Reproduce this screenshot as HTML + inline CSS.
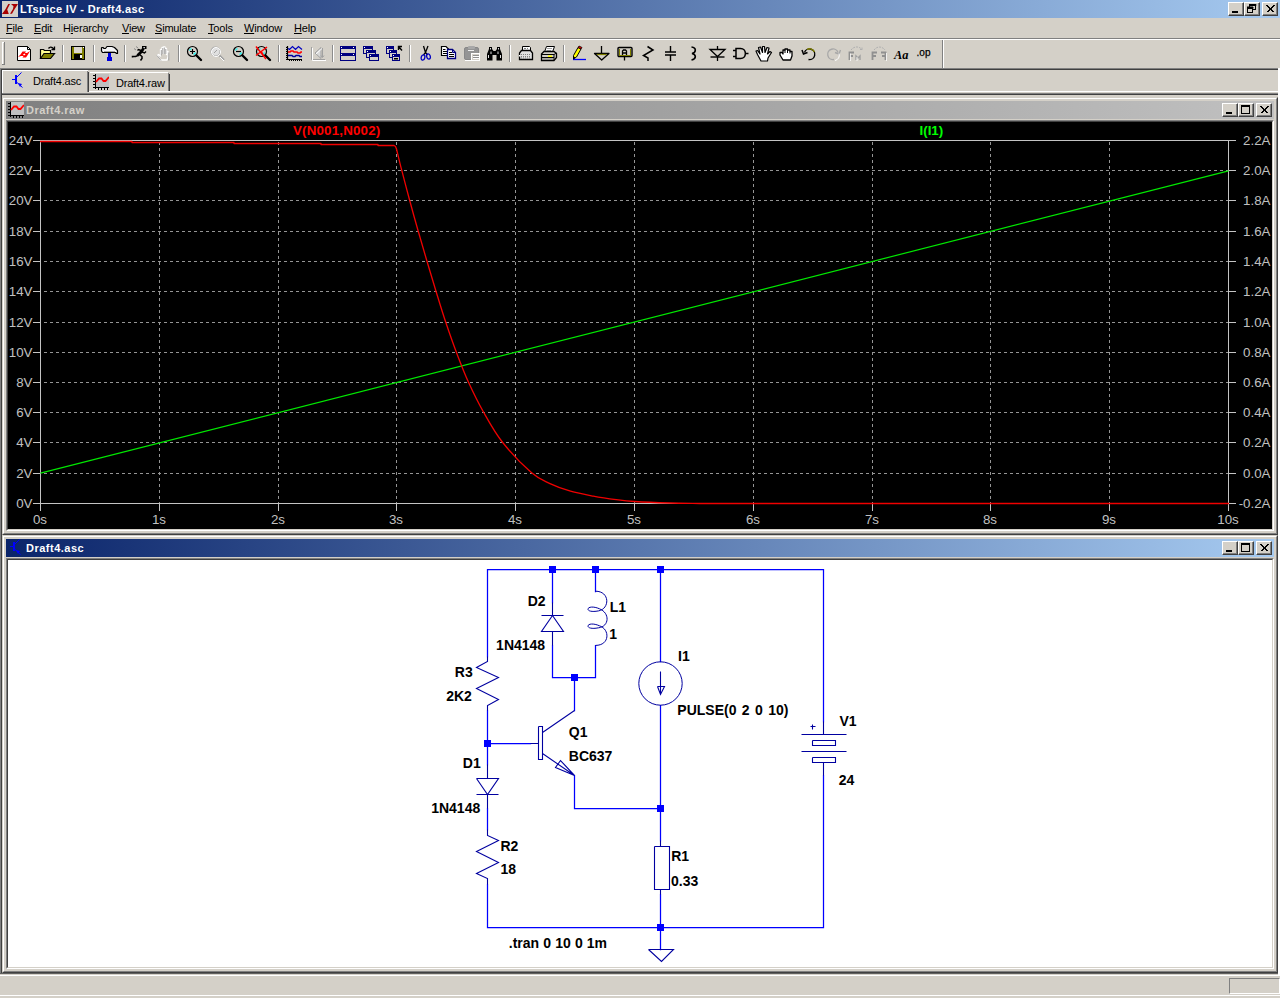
<!DOCTYPE html>
<html><head><meta charset="utf-8"><title>LTspice IV - Draft4.asc</title>
<style>
*{box-sizing:border-box;margin:0;padding:0}
html,body{width:1280px;height:998px;overflow:hidden;background:#d4d0c8;font-family:"Liberation Sans",sans-serif;font-size:11px;color:#000}
.abs{position:absolute}
#title{position:absolute;left:0;top:0;width:1280px;height:18px;background:linear-gradient(90deg,#0a246a,#a6caf0)}
#title .t{position:absolute;left:20px;top:2px;font-weight:bold;color:#fff;font-size:11px;line-height:14px;white-space:nowrap;letter-spacing:.35px}
.menu span{position:absolute;top:21px;line-height:14px;font-size:11px;white-space:nowrap;letter-spacing:-.2px}
.hl{position:absolute;height:1px;left:0;width:1280px}
.cbtn{position:absolute;width:16px;height:14px;background:#d4d0c8;border:1px solid;border-color:#fff #404040 #404040 #fff;box-shadow:inset -1px -1px 0 #808080}
</style></head><body>
<div id="title"><svg class="abs" style="left:2px;top:1px" width="16" height="16" viewBox="0 0 16 16"><rect width="16" height="16" fill="#d4d0c8"/><path d="M6.300 3H8L5.200 8.500L6.800 13H0L3.300 8.500Z" fill="#a80000"/><path d="M9 3H16L12.700 8L10 12.800H8L11 8L11.500 5.200Z" fill="#a80000"/></svg><div class="t">LTspice IV - Draft4.asc</div>
<div class="cbtn" style="left:1228px;top:2px"><i style="position:absolute;left:3px;top:8px;width:6px;height:2px;background:#000"></i></div>
<div class="cbtn" style="left:1244px;top:2px"><svg class="abs" style="left:2px;top:1px" width="10" height="10" viewBox="0 0 10 10"><path d="M3 0.5H9V1.5H3ZM2.5 0V3M8.5 0V6M6 5.5H9" stroke="#000" fill="none"/><path d="M0 3h6v1.5H0zM0.5 3V9M5.5 3V9M0 8.5H6" stroke="#000" fill="none"/><rect x="0" y="3" width="6" height="2" fill="#000"/><rect x="2" y="0" width="7" height="2" fill="#000"/></svg></div>
<div class="cbtn" style="left:1262px;top:2px"><svg class="abs" style="left:3px;top:2px" width="9" height="8" viewBox="0 0 9 8"><path d="M0.5 0.5L7.5 7.5M1.5 0.5L8.5 7.5M7.5 0.5L0.5 7.5M8.5 0.5L1.5 7.5" stroke="#000" stroke-width="1" fill="none" shape-rendering="crispEdges"/></svg></div>
</div>
<div class="menu"><span style="left:6px"><u>F</u>ile</span><span style="left:34px"><u>E</u>dit</span><span style="left:63px">H<u>i</u>erarchy</span><span style="left:122px"><u>V</u>iew</span><span style="left:155px"><u>S</u>imulate</span><span style="left:208px"><u>T</u>ools</span><span style="left:244px"><u>W</u>indow</span><span style="left:294px"><u>H</u>elp</span></div>
<div class="hl" style="top:38px;background:#808080"></div><div class="hl" style="top:39px;background:#fff"></div>
<div class="abs" style="left:2px;top:42px;width:1px;height:22px;background:#fff"></div><div class="abs" style="left:3px;top:42px;width:1px;height:1px;background:#fff"></div><div class="abs" style="left:4px;top:42px;width:1px;height:23px;background:#808080"></div><div class="abs" style="left:2px;top:64px;width:3px;height:1px;background:#808080"></div>
<div class="abs" style="left:942px;top:40px;width:1px;height:28px;background:#808080"></div><div class="abs" style="left:943px;top:40px;width:1px;height:28px;background:#fff"></div>
<div class="abs" style="left:0;top:68px;width:1278px;height:1px;background:#808080"></div><div class="abs" style="left:1px;top:69px;width:1277px;height:1px;background:#404040"></div>
<div class="abs" style="left:0;top:68px;width:1px;height:906px;background:#808080"></div><div class="abs" style="left:1px;top:69px;width:1px;height:905px;background:#404040"></div>
<div class="abs" style="left:1278px;top:68px;width:2px;height:907px;background:#fff"></div>
<svg class="abs" style="left:17px;top:46px;overflow:visible" width="16" height="16" viewBox="0 0 16 16"><path d="M0.500 0.500H10.500L13.500 3.500V14.500H0.500Z" fill="#fff" stroke="#000"/><path d="M10.500 0.500V3.500H13.500" fill="none" stroke="#000"/><path d="M1 11L3.500 8.500L5.500 5.500H9L8 7H10L13 5L11 8.500L9 11.500H5.500L6.500 10H4Z" fill="#f00"/><path d="M6 8.500L7.500 7.500L8.500 8.500L7 9.500Z" fill="#fff"/></svg>
<svg class="abs" style="left:40px;top:46px;overflow:visible" width="16" height="16" viewBox="0 0 16 16"><path d="M0.500 12.500V3.500H3.500L4.500 4.500H10.500V7.500" fill="#ffff90" stroke="#000" stroke-width="1.200"/><path d="M0.500 12.500L4 7.500H14.500L10.500 12.500Z" fill="#808000" stroke="#000" stroke-width="1.200"/><path d="M8.500 2.500Q10.500 -0.500 14 3" fill="none" stroke="#000" stroke-width="1.400"/><path d="M11.500 3.500H15M14.500 0.500V4" fill="none" stroke="#000" stroke-width="1.300"/></svg>
<svg class="abs" style="left:71px;top:46px;overflow:visible" width="16" height="16" viewBox="0 0 16 16"><rect x="0.500" y="0.500" width="13" height="13" fill="#808000" stroke="#000"/><rect x="3" y="1" width="8" height="6" fill="#dcd8d0"/><rect x="3" y="8" width="8" height="5" fill="#000"/><rect x="9" y="9" width="2" height="3" fill="#fff"/><rect x="12" y="1" width="1" height="1" fill="#fff"/></svg>
<svg class="abs" style="left:102px;top:46px;overflow:visible" width="16" height="16" viewBox="0 0 16 16"><path d="M-0.500 2V5L0.500 6.500H13.500L14.500 7.500L15.500 7.500V4.500L12.500 1.500L10 0.500H5L3.500 2.500H2L1 1.500H0Z" fill="#f4f4f4" stroke="#000" stroke-width="1.200" stroke-linejoin="round"/><path d="M2 5.500H13" stroke="#a0a0a0"/><rect x="6" y="7" width="3" height="5" fill="#0000e0"/><rect x="5" y="11" width="5" height="4" fill="#0000e0"/></svg>
<svg class="abs" style="left:133px;top:46px;overflow:visible" width="16" height="16" viewBox="0 0 16 16"><rect x="9" y="0" width="4.500" height="3" fill="#000"/><rect x="10.500" y="1" width="1.300" height="1.300" fill="#fff"/><path d="M10.500 2.500L8 6L4.500 9.500" stroke="#000" stroke-width="2.800" fill="none"/><path d="M5 9.500L2.500 10.500H-0.500V11.500" stroke="#000" stroke-width="1.500" fill="none"/><path d="M6.500 8.500L9 10.500V12.500L7.500 14.500" stroke="#000" stroke-width="1.500" fill="none"/><path d="M8 4.500L5.500 3.500L4.500 4.500" stroke="#000" stroke-width="1.400" fill="none"/><path d="M9 6L11.500 7L13 5.500" stroke="#000" stroke-width="1.400" fill="none"/><path d="M1 2.500L3 4M3 0.500L5 2" stroke="#808080" stroke-width=".9" fill="none"/></svg>
<svg class="abs" style="left:156px;top:46px;overflow:visible" width="16" height="16" viewBox="0 0 16 16"><path d="M4.500 14L1.500 9.500L2.500 8.500L4.500 10V3.500H6V7.500V1.500H7.500V7.500V1H9V7.500V2.500H10.500V8.500V5.500H12V11L11 14Z" fill="#d4d0c8" stroke="#fff" stroke-width="1.300" stroke-linejoin="round"/><path d="M5 14.500L1 9.500M5.300 4V9.500M6.800 2V8M8.300 1.500V8M9.800 3V8M12.800 14.500V6.500" stroke="#9a9a9a" fill="none" stroke-width=".9"/></svg>
<svg class="abs" style="left:187px;top:46px;overflow:visible" width="16" height="16" viewBox="0 0 16 16"><circle cx="5.5" cy="5.500" r="5" fill="#d4d0c8" stroke="#000" stroke-width="1.200"/><path d="M2.500 4.500A3.200 3.200 0 0 1 4.500 2.500M6.500 8.500A3.200 3.200 0 0 0 8.500 6.500" stroke="#0ff" stroke-width="1.200" fill="none"/><path d="M9.500 9.500L14 14" stroke="#000" stroke-width="2.400" stroke-linecap="round"/><path d="M3 5.500H8M5.500 3V8" stroke="#000" stroke-width="1.200"/></svg>
<svg class="abs" style="left:210px;top:46px;overflow:visible" width="16" height="16" viewBox="0 0 16 16"><circle cx="5.5" cy="5.500" r="4.500" fill="#e0e0e0" stroke="#a8a8a8" stroke-width="1.200"/><circle cx="6" cy="6" r="4.500" fill="none" stroke="#fff" stroke-width="1"/><path d="M4 7L7 4" stroke="#a0a0a0"/><path d="M9.500 9.500L14 14" stroke="#a0a0a0" stroke-width="2"/><path d="M10 11L14 15" stroke="#fff" stroke-width="1"/></svg>
<svg class="abs" style="left:233px;top:46px;overflow:visible" width="16" height="16" viewBox="0 0 16 16"><circle cx="5.5" cy="5.500" r="5" fill="#d4d0c8" stroke="#000" stroke-width="1.200"/><path d="M2.500 4.500A3.200 3.200 0 0 1 4.500 2.500M6.500 8.500A3.200 3.200 0 0 0 8.500 6.500" stroke="#0ff" stroke-width="1.200" fill="none"/><path d="M9.500 9.500L14 14" stroke="#000" stroke-width="2.400" stroke-linecap="round"/><path d="M3 5.500H8" stroke="#000" stroke-width="1.200"/></svg>
<svg class="abs" style="left:256px;top:46px;overflow:visible" width="16" height="16" viewBox="0 0 16 16"><circle cx="5.5" cy="5.500" r="5" fill="#d4d0c8" stroke="#000" stroke-width="1.200"/><path d="M2.500 4.500A3.200 3.200 0 0 1 4.500 2.500M6.500 8.500A3.200 3.200 0 0 0 8.500 6.500" stroke="#0ff" stroke-width="1.200" fill="none"/><path d="M9.500 9.500L14 14" stroke="#000" stroke-width="2.400" stroke-linecap="round"/><path d="M0 0.500L10 13M0 9.500L11 1M5 5L9 12" stroke="#f00" stroke-width="1.500" fill="none"/></svg>
<svg class="abs" style="left:287px;top:46px;overflow:visible" width="16" height="16" viewBox="0 0 16 16"><path d="M0.500 0V14M-1 13.500H15" stroke="#000" stroke-width="1.200" fill="none"/><path d="M-1 1.500H0M-1 3.500H0M-1 5.500H0M-1 7.500H0M-1 9.500H0M-1 11.500H0M2.500 14V15M4.500 14V15M6.500 14V15M8.500 14V15M10.500 14V15M12.500 14V15M14.500 14V15" stroke="#000" fill="none"/><path d="M1 2.500L2.500 3.500L5.500 0.500L8.500 3.500L11.500 0.500L15 3.500" stroke="#0000c0" stroke-width="1.200" fill="none"/><path d="M1 6H3L4 5H6L7 6H10L11 7H13L14 6H15" stroke="#f00" stroke-width="1.700" fill="none"/><path d="M1 9.500H5L6 10.500H8L9 9.500H12L13 10.500H15" stroke="#0000a0" stroke-width="1.500" fill="none"/></svg>
<svg class="abs" style="left:310px;top:46px;overflow:visible" width="16" height="16" viewBox="0 0 16 16"><path d="M1.500 1V13.500H15" stroke="#a0a0a0" fill="none"/><path d="M2.500 2V14.500H16" stroke="#fff" fill="none"/><path d="M5 7L11 1.500V12.500Z" fill="#d8d8d8" stroke="#a0a0a0"/><path d="M12.500 2V11M11 9.500L12.500 11.500L14 9.500" stroke="#a0a0a0" fill="none"/><path d="M6 8L12 2.500" stroke="#fff" fill="none"/></svg>
<svg class="abs" style="left:340px;top:46px;overflow:visible" width="16" height="16" viewBox="0 0 16 16"><rect x="0.5" y="0.5" width="15" height="7" fill="#d4d0c8" stroke="#000080"/><rect x="0" y="0" width="16" height="3" fill="#000080"/><rect x="1" y="1" width="1" height="1" fill="#fff"/><rect x="0.5" y="7.5" width="15" height="7" fill="#d4d0c8" stroke="#000080"/><rect x="0" y="7" width="16" height="3" fill="#000080"/><rect x="1" y="8" width="1" height="1" fill="#fff"/><rect x="13" y="1" width="1" height="1" fill="#fff"/><rect x="13" y="8" width="1" height="1" fill="#fff"/></svg>
<svg class="abs" style="left:363px;top:46px;overflow:visible" width="16" height="16" viewBox="0 0 16 16"><rect x="0.5" y="0.5" width="9" height="7" fill="#d4d0c8" stroke="#000080"/><rect x="0" y="0" width="10" height="3" fill="#000080"/><rect x="1" y="1" width="1" height="1" fill="#fff"/><rect x="3.5" y="4.5" width="9" height="7" fill="#d4d0c8" stroke="#000080"/><rect x="3" y="4" width="10" height="3" fill="#000080"/><rect x="4" y="5" width="1" height="1" fill="#fff"/><rect x="6.5" y="8.5" width="9" height="6" fill="#d4d0c8" stroke="#000080"/><rect x="6" y="8" width="10" height="3" fill="#000080"/><rect x="7" y="9" width="1" height="1" fill="#fff"/></svg>
<svg class="abs" style="left:386px;top:46px;overflow:visible" width="16" height="16" viewBox="0 0 16 16"><rect x="0.5" y="0.5" width="7" height="7" fill="#d4d0c8" stroke="#000080"/><rect x="0" y="0" width="8" height="3" fill="#000080"/><rect x="1" y="1" width="1" height="1" fill="#fff"/><rect x="3.5" y="4.5" width="7" height="7" fill="#d4d0c8" stroke="#000080"/><rect x="3" y="4" width="8" height="3" fill="#000080"/><rect x="4" y="5" width="1" height="1" fill="#fff"/><rect x="6.5" y="8.5" width="7" height="6" fill="#d4d0c8" stroke="#000080"/><rect x="6" y="8" width="8" height="3" fill="#000080"/><rect x="7" y="9" width="1" height="1" fill="#fff"/><rect x="8" y="12" width="4" height="1.500" fill="#000"/><path d="M16 0.500H12.500V4M12.500 0.500L16 4.500" stroke="#000" stroke-width="1.400" fill="none"/></svg>
<svg class="abs" style="left:418px;top:46px;overflow:visible" width="16" height="16" viewBox="0 0 16 16"><path d="M5.500 0L7.500 6.500L9.500 9M10 0L7.500 6.500L5.500 9" stroke="#000" stroke-width="1.300" fill="none"/><ellipse cx="5" cy="11.500" rx="1.800" ry="2.700" fill="none" stroke="#0000c0" stroke-width="1.300" transform="rotate(15 5 11.500)"/><ellipse cx="10.500" cy="10.500" rx="1.800" ry="2.700" fill="none" stroke="#0000c0" stroke-width="1.300" transform="rotate(-15 10.500 10.500)"/></svg>
<svg class="abs" style="left:441px;top:46px;overflow:visible" width="16" height="16" viewBox="0 0 16 16"><path d="M0.500 0.500H5L7.500 3V9.500H0.500Z" fill="#fff" stroke="#000" stroke-width="1.200"/><path d="M2 3.500H4.500M2 5.500H6M2 7.500H6" stroke="#000"/><path d="M6.500 3.500H11.500L14.500 6.500V12.500H6.500Z" fill="#fff" stroke="#000080" stroke-width="1.300"/><path d="M8 6.500H11M8 8.500H13M8 10.500H13" stroke="#000"/><path d="M11.500 3.500V6.500H14.500" fill="none" stroke="#000080"/></svg>
<svg class="abs" style="left:464px;top:46px;overflow:visible" width="16" height="16" viewBox="0 0 16 16"><rect x="0.500" y="1.500" width="14" height="12" rx="1.500" fill="#949494" stroke="#888"/><rect x="4" y="0" width="7" height="3" rx="1" fill="#a8a8a8"/><path d="M4 4.500H10" stroke="#f0f0f0"/><path d="M1 14.500H7" stroke="#fff"/><rect x="7.500" y="7.500" width="8" height="7" fill="#d4d0c8" stroke="#fff"/><path d="M9 9.500H15M9 11.500H15" stroke="#909090"/><path d="M9 10.500H15M9 12.500H15" stroke="#fff"/></svg>
<svg class="abs" style="left:487px;top:46px;overflow:visible" width="16" height="16" viewBox="0 0 16 16"><path d="M2 1H5V3L6.500 5H8.500L10 3V1H13V3L15 8V14.500H9.500V9H5.500V14.500H0V8L2 3Z" fill="#000"/><path d="M3.500 2V3.500M11.500 2V3.500M1.500 9V12M4 5.500V8M11 5.500V8M13.500 9V12" stroke="#e0e0e0" stroke-width="1"/></svg>
<svg class="abs" style="left:518px;top:46px;overflow:visible" width="16" height="16" viewBox="0 0 16 16"><path d="M4.500 5V0.500H11.500L12.500 1.500V5" fill="#fff" stroke="#000"/><path d="M6 2.500H8M9 2.500H10" stroke="#808080"/><path d="M1.500 13.500V7L3.500 4.500H12.500L14.500 7V13.500Z" fill="#e0e0e0" stroke="#000" stroke-width="1.300"/><path d="M3 8.500H13M3 10.500H13M3 12H13" stroke="#808080" stroke-dasharray="1 1"/><rect x="1" y="9" width="1.500" height="1.500" fill="#fff"/></svg>
<svg class="abs" style="left:541px;top:46px;overflow:visible" width="16" height="16" viewBox="0 0 16 16"><path d="M3.500 6L5.500 0.500H13.500L11.500 6" fill="#fff" stroke="#000"/><path d="M6 2.500H11M5.500 4.500H10" stroke="#a0a0a0"/><path d="M0.500 8L3 5.500H13L15.500 7.500V11.500L13 14.500H0.500Z" fill="#d4d0c8" stroke="#000" stroke-width="1.300"/><path d="M0.500 8.500H13L15.500 7M13 8.500V14" stroke="#000" fill="none"/><path d="M1 11.500H13" stroke="#000"/><rect x="7" y="9.500" width="4" height="1.500" fill="#ff0"/><path d="M1 13H12" stroke="#808080"/></svg>
<svg class="abs" style="left:572px;top:46px;overflow:visible" width="16" height="16" viewBox="0 0 16 16"><path d="M1 13.500H14" stroke="#00f" stroke-width="1.300"/><path d="M1.500 13L1.500 9.500L6 1.500L9 3L4.500 11Z" fill="#ff0" stroke="#000"/><path d="M6 1.500L7 0L10 1.500L9 3Z" fill="#f00" stroke="#000" stroke-width=".8"/><path d="M1.500 13V10.500L3.500 11.500Z" fill="#000"/></svg>
<svg class="abs" style="left:595px;top:46px;overflow:visible" width="16" height="16" viewBox="0 0 16 16"><path d="M6.500 0V7" stroke="#000" stroke-width="1.300"/><path d="M-0.500 7.500H14L6.700 14Z" fill="none" stroke="#000" stroke-width="1.300" stroke-linejoin="round"/><path d="M2 8.500H11.500" stroke="#808000" stroke-width="1.200" fill="none"/></svg>
<svg class="abs" style="left:618px;top:46px;overflow:visible" width="16" height="16" viewBox="0 0 16 16"><rect x="0" y="1.500" width="14" height="9" rx="1" fill="#d4d0c8" stroke="#000" stroke-width="1.400"/><path d="M1 9.500H13M12.500 3V9.500M1.500 3V9" stroke="#808000" stroke-width="1" fill="none"/><path d="M6.500 11V14.500" stroke="#000" stroke-width="1.300"/><path d="M4.500 9V5L5.500 4H7.500L8.500 5V9M4.500 7H8.500" stroke="#000" stroke-width="1.300" fill="none"/></svg>
<svg class="abs" style="left:641px;top:46px;overflow:visible" width="16" height="16" viewBox="0 0 16 16"><path d="M6.500 0.500L12 4L2.500 9.500L7 12V15" stroke="#000" stroke-width="1.500" fill="none" stroke-linejoin="miter"/></svg>
<svg class="abs" style="left:664px;top:46px;overflow:visible" width="16" height="16" viewBox="0 0 16 16"><path d="M6.500 0V6M6.500 9V15" stroke="#000" stroke-width="1.400"/><path d="M1 6H12M1 9H12" stroke="#000" stroke-width="1.400"/></svg>
<svg class="abs" style="left:687px;top:46px;overflow:visible" width="16" height="16" viewBox="0 0 16 16"><path d="M4.500 1C9.500 1.500 9.500 6.500 5 7.500C9.500 8.500 9.500 13 4.500 14" stroke="#000" stroke-width="1.600" fill="none"/></svg>
<svg class="abs" style="left:710px;top:46px;overflow:visible" width="16" height="16" viewBox="0 0 16 16"><path d="M7.500 0V15" stroke="#000" stroke-width="1.300"/><path d="M0 3.500H15L7.500 10.500Z" fill="#d4d0c8" stroke="#000" stroke-width="1.300"/><path d="M0.500 11H14.500" stroke="#000" stroke-width="1.400"/></svg>
<svg class="abs" style="left:733px;top:46px;overflow:visible" width="16" height="16" viewBox="0 0 16 16"><path d="M3 2.500H7.500C14 2.500 14 12.500 7.500 12.500H3Z" fill="#d4d0c8" stroke="#000" stroke-width="1.500"/><path d="M0 4.500H3M0 10.500H3M12 7.500H15.500" stroke="#000" stroke-width="1.300"/></svg>
<svg class="abs" style="left:756px;top:46px;overflow:visible" width="16" height="16" viewBox="0 0 16 16"><path d="M5 15L1.500 8.500L0 5L1.500 4.500L4 8L2.500 1.500L4.500 1L6.500 6.500L6.500 0.500H8.500L9 6.500L11 1.500L13 2L11.500 8L14 5.500L15.500 6.500L12 12L11.500 15Z" fill="#fff" stroke="#000" stroke-width="1.200" stroke-linejoin="round"/></svg>
<svg class="abs" style="left:779px;top:46px;overflow:visible" width="16" height="16" viewBox="0 0 16 16"><path d="M4 14L1 9V6.500H3L4 8V4H6V3H8.500V4H11V5.500H13V10L11.500 14Z" fill="#fff" stroke="#000" stroke-width="1.300" stroke-linejoin="round"/><path d="M6 4V7M8.500 4V7M11 5.500V7.500" stroke="#000"/></svg>
<svg class="abs" style="left:802px;top:46px;overflow:visible" width="16" height="16" viewBox="0 0 16 16"><path d="M2.500 6.500A5.300 5.300 0 1 1 6.500 13.500" stroke="#000" stroke-width="1.400" fill="none"/><path d="M5 3.500A5.300 5.300 0 0 1 12.500 6" stroke="#808000" stroke-width="1.400" fill="none"/><path d="M0 4L1.500 8L5.500 6.500" stroke="#000" stroke-width="1.500" fill="none"/></svg>
<svg class="abs" style="left:825px;top:46px;overflow:visible" width="16" height="16" viewBox="0 0 16 16"><path d="M13 6.500A5.300 5.300 0 1 0 9 13.500" stroke="#a8a8a8" stroke-width="1.400" fill="none"/><path d="M15.500 4L14 8L10 6.500" stroke="#a8a8a8" stroke-width="1.400" fill="none"/><path d="M14 7.500A5.300 5.300 0 0 1 10 14.500" stroke="#fff" stroke-width="1" fill="none"/></svg>
<svg class="abs" style="left:848px;top:46px;overflow:visible" width="16" height="16" viewBox="0 0 16 16"><path d="M1.500 14V6.500H6M1.500 10H5" stroke="#909090" stroke-width="1.800" fill="none"/><path d="M8 14V10L10 12L12 10V14" stroke="#a0a0a0" stroke-width="1.400" fill="none"/><path d="M3 4C6 0 11 0 14 3.500M14 3.500H11M14 3.500V1" stroke="#b0b0b0" fill="none" stroke-dasharray="2 1"/><path d="M2.500 15V7.500M9 15V11" stroke="#fff" stroke-width=".8" fill="none"/></svg>
<svg class="abs" style="left:871px;top:46px;overflow:visible" width="16" height="16" viewBox="0 0 16 16"><path d="M1.500 14V6.500H6M1.500 10H5" stroke="#909090" stroke-width="1.800" fill="none"/><path d="M14.500 14V6.500H10M14.500 10H11" stroke="#909090" stroke-width="1.800" fill="none"/><path d="M3 4C6 0 11 0 14 4" stroke="#b0b0b0" fill="none" stroke-dasharray="2 1"/><path d="M15.500 15V7" stroke="#fff" stroke-width=".8"/></svg>
<svg class="abs" style="left:894px;top:46px;overflow:visible" width="16" height="16" viewBox="0 0 16 16"><text x="0" y="12.500" font-family="Liberation Serif, serif" font-style="italic" font-weight="bold" font-size="13.500px" fill="#000" textLength="14.500" lengthAdjust="spacingAndGlyphs">Aa</text></svg>
<svg class="abs" style="left:917px;top:46px;overflow:visible" width="16" height="16" viewBox="0 0 16 16"><text x="-0.500" y="10" font-family="Liberation Sans, sans-serif" font-size="10.500px" fill="#000" stroke="#000" stroke-width=".25" textLength="14" lengthAdjust="spacingAndGlyphs">.op</text></svg>
<div class="abs" style="left:62px;top:45px;width:1px;height:17px;background:#8c8c8c"></div><div class="abs" style="left:63px;top:45px;width:1px;height:17px;background:#fff"></div>
<div class="abs" style="left:93px;top:45px;width:1px;height:17px;background:#8c8c8c"></div><div class="abs" style="left:94px;top:45px;width:1px;height:17px;background:#fff"></div>
<div class="abs" style="left:124px;top:45px;width:1px;height:17px;background:#8c8c8c"></div><div class="abs" style="left:125px;top:45px;width:1px;height:17px;background:#fff"></div>
<div class="abs" style="left:178px;top:45px;width:1px;height:17px;background:#8c8c8c"></div><div class="abs" style="left:179px;top:45px;width:1px;height:17px;background:#fff"></div>
<div class="abs" style="left:278px;top:45px;width:1px;height:17px;background:#8c8c8c"></div><div class="abs" style="left:279px;top:45px;width:1px;height:17px;background:#fff"></div>
<div class="abs" style="left:332px;top:45px;width:1px;height:17px;background:#8c8c8c"></div><div class="abs" style="left:333px;top:45px;width:1px;height:17px;background:#fff"></div>
<div class="abs" style="left:409px;top:45px;width:1px;height:17px;background:#8c8c8c"></div><div class="abs" style="left:410px;top:45px;width:1px;height:17px;background:#fff"></div>
<div class="abs" style="left:509px;top:45px;width:1px;height:17px;background:#8c8c8c"></div><div class="abs" style="left:510px;top:45px;width:1px;height:17px;background:#fff"></div>
<div class="abs" style="left:563px;top:45px;width:1px;height:17px;background:#8c8c8c"></div><div class="abs" style="left:564px;top:45px;width:1px;height:17px;background:#fff"></div>
<div class="abs" style="left:2px;top:70px;width:86px;height:1px;background:#fff"></div>
<div class="abs" style="left:2px;top:70px;width:1px;height:23px;background:#fff"></div>
<div class="abs" style="left:87px;top:71px;width:1px;height:21px;background:#808080"></div><div class="abs" style="left:88px;top:72px;width:1px;height:20px;background:#404040"></div>
<svg class="abs" style="left:11px;top:72px" width="14" height="18" viewBox="0 0 14 18"><path d="M1 7.5H5M10.5 0.5L5.5 5.5M5.5 10L11.5 15.5" stroke="#00f" stroke-width="1" fill="none"/><rect x="4" y="3" width="2" height="9" fill="#00f"/><path d="M7 11L11 12L9 15Z" fill="#00f"/></svg>
<span class="abs" style="left:33px;top:74px;line-height:14px;white-space:nowrap;letter-spacing:-.2px">Draft4.asc</span>
<div class="abs" style="left:90px;top:72px;width:78px;height:1px;background:#fff"></div>
<div class="abs" style="left:168px;top:73px;width:1px;height:18px;background:#808080"></div><div class="abs" style="left:169px;top:74px;width:1px;height:17px;background:#404040"></div>
<svg class="abs" style="left:93px;top:74px" width="16" height="16" viewBox="0 0 16 16"><rect x="3" y="0" width="13" height="13" fill="#c0c0c0"/><path d="M2.5 0V15M0 13.5H16M0 1.5H2M0 4.5H2M0 7.5H2M0 10.5H2M5.500 14V16M8.500 14V16M11.500 14V16M14.500 14V16" stroke="#000" fill="none"/><path d="M3 8L6 4.500H8.500L10.500 7H12.500L16 3" stroke="#f00" stroke-width="1.800" fill="none"/></svg>
<span class="abs" style="left:116px;top:76px;line-height:14px;white-space:nowrap;letter-spacing:-.2px">Draft4.raw</span>
<div class="abs" style="left:89px;top:91px;width:1189px;height:1px;background:#fff"></div>
<div class="abs" style="left:2px;top:93px;width:1276px;height:1px;background:#808080"></div><div class="abs" style="left:2px;top:94px;width:1276px;height:1px;background:#404040"></div>
<div class="abs" style="left:2px;top:97px;width:1276px;height:438px;background:#d4d0c8;border:1px solid;border-color:#d4d0c8 #404040 #404040 #d4d0c8"></div>
<div class="abs" style="left:3px;top:98px;width:1274px;height:436px;border:1px solid;border-color:#fff #808080 #808080 #fff"></div>
<div class="abs" style="left:6px;top:101px;width:1268px;height:18px;background:linear-gradient(90deg,#808080,#c0c0c0)"></div>
<svg class="abs" style="left:8px;top:102px" width="16" height="16" viewBox="0 0 16 16"><rect x="3" y="0" width="13" height="13" fill="#c0c0c0"/><path d="M2.5 0V15M0 13.5H16M0 1.5H2M0 4.5H2M0 7.5H2M0 10.5H2M5.500 14V16M8.500 14V16M11.500 14V16M14.500 14V16" stroke="#000" fill="none"/><path d="M3 8L6 4.500H8.500L10.500 7H12.500L16 3" stroke="#f00" stroke-width="1.800" fill="none"/></svg>
<span class="abs" style="left:26px;top:103px;line-height:14px;font-weight:bold;color:#d4d0c8;white-space:nowrap;letter-spacing:.5px">Draft4.raw</span>
<div class="cbtn" style="left:1222px;top:103px"><i style="position:absolute;left:3px;top:8px;width:6px;height:2px;background:#000"></i></div>
<div class="cbtn" style="left:1238px;top:103px"><i style="position:absolute;left:2px;top:1px;width:9px;height:9px;border:1px solid #000;border-top-width:2px"></i></div>
<div class="cbtn" style="left:1256px;top:103px"><svg class="abs" style="left:3px;top:2px" width="9" height="8" viewBox="0 0 9 8"><path d="M0.5 0.5L7.5 7.5M1.5 0.5L8.5 7.5M7.5 0.5L0.5 7.5M8.500 0.5L1.500 7.500" stroke="#000" stroke-width="1" fill="none" shape-rendering="crispEdges"/></svg></div>
<div class="abs" style="left:6px;top:120px;width:1268px;height:411px;border:1px solid;border-color:#808080 #fff #fff #808080"></div>
<div class="abs" style="left:7px;top:121px;width:1266px;height:409px;border:1px solid;border-color:#404040 #d4d0c8 #d4d0c8 #404040"></div>
<div class="abs" style="left:2px;top:535px;width:1276px;height:438px;background:#d4d0c8;border:1px solid;border-color:#d4d0c8 #404040 #404040 #d4d0c8"></div>
<div class="abs" style="left:3px;top:536px;width:1274px;height:436px;border:1px solid;border-color:#fff #808080 #808080 #fff"></div>
<div class="abs" style="left:6px;top:539px;width:1268px;height:18px;background:linear-gradient(90deg,#0a246a,#a6caf0)"></div>
<svg class="abs" style="left:9px;top:539px" width="14" height="18" viewBox="0 0 14 18"><path d="M1 7.500H5M10.500 0.500L5.500 5.500M5.500 10L11.500 15.500" stroke="#00f" stroke-width="1" fill="none"/><rect x="4" y="3" width="2" height="9" fill="#00f"/><path d="M7 11L11 12L9 15Z" fill="#00f"/></svg>
<span class="abs" style="left:26px;top:541px;line-height:14px;font-weight:bold;color:#fff;white-space:nowrap;letter-spacing:.5px">Draft4.asc</span>
<div class="cbtn" style="left:1222px;top:541px"><i style="position:absolute;left:3px;top:8px;width:6px;height:2px;background:#000"></i></div>
<div class="cbtn" style="left:1238px;top:541px"><i style="position:absolute;left:2px;top:1px;width:9px;height:9px;border:1px solid #000;border-top-width:2px"></i></div>
<div class="cbtn" style="left:1256px;top:541px"><svg class="abs" style="left:3px;top:2px" width="9" height="8" viewBox="0 0 9 8"><path d="M0.5 0.5L7.5 7.5M1.5 0.5L8.5 7.5M7.5 0.5L0.5 7.5M8.500 0.5L1.500 7.500" stroke="#000" stroke-width="1" fill="none" shape-rendering="crispEdges"/></svg></div>
<div class="abs" style="left:6px;top:558px;width:1268px;height:411px;border:1px solid;border-color:#808080 #fff #fff #808080"></div>
<div class="abs" style="left:7px;top:559px;width:1266px;height:409px;border:1px solid;border-color:#404040 #d4d0c8 #d4d0c8 #404040"></div>
<svg class="abs" style="left:8px;top:122px" width="1264" height="407" viewBox="8 122 1264 407" font-family="Liberation Sans, sans-serif">
<rect x="8" y="122" width="1264" height="407" fill="#000"/>
<g stroke="#959595" stroke-width="1" stroke-dasharray="3 3" shape-rendering="crispEdges">
<path d="M159.5 142 V503"/>
<path d="M278.5 142 V503"/>
<path d="M396.5 142 V503"/>
<path d="M515.5 142 V503"/>
<path d="M634.5 142 V503"/>
<path d="M753.5 142 V503"/>
<path d="M872.5 142 V503"/>
<path d="M990.5 142 V503"/>
<path d="M1109.5 142 V503"/>
<path d="M44 170.5 H1228"/>
<path d="M44 200.5 H1228"/>
<path d="M44 231.5 H1228"/>
<path d="M44 261.5 H1228"/>
<path d="M44 291.5 H1228"/>
<path d="M44 322.5 H1228"/>
<path d="M44 352.5 H1228"/>
<path d="M44 382.5 H1228"/>
<path d="M44 412.5 H1228"/>
<path d="M44 442.5 H1228"/>
<path d="M44 473.5 H1228"/>
</g>
<g stroke="#c4c4c4" stroke-width="1" shape-rendering="crispEdges" fill="none">
<path d="M33 140.5 H1236"/>
<path d="M33 503.5 H1236"/>
<path d="M40.5 140 V511"/>
<path d="M1228.5 140 V511"/>
<path d="M159.5 503 V511"/>
<path d="M278.5 503 V511"/>
<path d="M396.5 503 V511"/>
<path d="M515.5 503 V511"/>
<path d="M634.5 503 V511"/>
<path d="M753.5 503 V511"/>
<path d="M872.5 503 V511"/>
<path d="M990.5 503 V511"/>
<path d="M1109.5 503 V511"/>
<path d="M33 170.5 H40"/>
<path d="M1228 170.5 H1236"/>
<path d="M33 200.5 H40"/>
<path d="M1228 200.5 H1236"/>
<path d="M33 231.5 H40"/>
<path d="M1228 231.5 H1236"/>
<path d="M33 261.5 H40"/>
<path d="M1228 261.5 H1236"/>
<path d="M33 291.5 H40"/>
<path d="M1228 291.5 H1236"/>
<path d="M33 322.5 H40"/>
<path d="M1228 322.5 H1236"/>
<path d="M33 352.5 H40"/>
<path d="M1228 352.5 H1236"/>
<path d="M33 382.5 H40"/>
<path d="M1228 382.5 H1236"/>
<path d="M33 412.5 H40"/>
<path d="M1228 412.5 H1236"/>
<path d="M33 442.5 H40"/>
<path d="M1228 442.5 H1236"/>
<path d="M33 473.5 H40"/>
<path d="M1228 473.5 H1236"/>
</g>
<g fill="#c0c0c0" font-size="13.33px">
<text x="32.5" y="144.7" text-anchor="end">24V</text>
<text x="1270.5" y="144.7" text-anchor="end">2.2A</text>
<text x="32.5" y="174.7" text-anchor="end">22V</text>
<text x="1270.5" y="174.7" text-anchor="end">2.0A</text>
<text x="32.5" y="204.7" text-anchor="end">20V</text>
<text x="1270.5" y="204.7" text-anchor="end">1.8A</text>
<text x="32.5" y="235.7" text-anchor="end">18V</text>
<text x="1270.5" y="235.7" text-anchor="end">1.6A</text>
<text x="32.5" y="265.7" text-anchor="end">16V</text>
<text x="1270.5" y="265.7" text-anchor="end">1.4A</text>
<text x="32.5" y="295.7" text-anchor="end">14V</text>
<text x="1270.5" y="295.7" text-anchor="end">1.2A</text>
<text x="32.5" y="326.7" text-anchor="end">12V</text>
<text x="1270.5" y="326.7" text-anchor="end">1.0A</text>
<text x="32.5" y="356.7" text-anchor="end">10V</text>
<text x="1270.5" y="356.7" text-anchor="end">0.8A</text>
<text x="32.5" y="386.7" text-anchor="end">8V</text>
<text x="1270.5" y="386.7" text-anchor="end">0.6A</text>
<text x="32.5" y="416.7" text-anchor="end">6V</text>
<text x="1270.5" y="416.7" text-anchor="end">0.4A</text>
<text x="32.5" y="446.7" text-anchor="end">4V</text>
<text x="1270.5" y="446.7" text-anchor="end">0.2A</text>
<text x="32.5" y="477.7" text-anchor="end">2V</text>
<text x="1270.5" y="477.7" text-anchor="end">0.0A</text>
<text x="32.5" y="507.7" text-anchor="end">0V</text>
<text x="1270.5" y="507.7" text-anchor="end">-0.2A</text>
<text x="40" y="524" text-anchor="middle">0s</text>
<text x="159" y="524" text-anchor="middle">1s</text>
<text x="278" y="524" text-anchor="middle">2s</text>
<text x="396" y="524" text-anchor="middle">3s</text>
<text x="515" y="524" text-anchor="middle">4s</text>
<text x="634" y="524" text-anchor="middle">5s</text>
<text x="753" y="524" text-anchor="middle">6s</text>
<text x="872" y="524" text-anchor="middle">7s</text>
<text x="990" y="524" text-anchor="middle">8s</text>
<text x="1109" y="524" text-anchor="middle">9s</text>
<text x="1228" y="524" text-anchor="middle">10s</text>
</g>
<path d="M40.5 473.2 L1228.5 170.8" stroke="#00e800" stroke-width="1.2" fill="none"/>
<path d="M40.0 141.5 L132.0 141.5 L132.0 142.5 L234.0 142.5 L234.0 143.5 L321.0 143.5 L321.0 144.5 L378.0 144.5 L378.0 145.5 L394.0 145.5 L395.5 146.5 L396.5 149.0 C397.4 152.5 399.5 161.7 401.7 170.2 C403.9 178.8 407.0 190.4 409.7 200.5 C412.4 210.6 415.2 220.7 418.1 230.8 C421.0 240.8 423.9 250.9 426.9 261.0 C429.9 271.1 432.9 281.2 436.0 291.2 C439.1 301.3 442.1 311.4 445.5 321.5 C448.9 331.6 452.4 341.7 456.2 351.8 C460.0 361.8 463.8 371.9 468.4 382.0 C473.0 392.1 477.9 402.2 483.6 412.2 C489.3 422.3 494.7 432.4 502.7 442.5 C510.7 452.6 523.7 465.9 531.6 472.8 C539.5 479.6 543.5 480.5 550.0 483.6 C556.5 486.7 563.3 489.1 570.5 491.2 C577.7 493.3 585.7 494.7 593.3 496.1 C600.9 497.5 609.3 498.7 616.2 499.6 C623.1 500.5 625.6 500.9 634.5 501.5 C643.4 502.1 658.6 502.7 669.5 503.0 C680.4 503.3 694.9 503.4 700.0 503.5 L1229.0 503.5" stroke="#f00000" stroke-width="1.3" fill="none" stroke-linejoin="round"/>
<g font-weight="bold" font-size="13.33px"><text x="293" y="135" fill="#f00" letter-spacing="0.18">V(N001,N002)</text><text x="919.500" y="135" fill="#0f0">I(I1)</text></g>
</svg>
<svg class="abs" style="left:8px;top:560px" width="1264" height="407" viewBox="8 560 1264 407" font-family="Liberation Sans, sans-serif">
<rect x="8" y="560" width="1264" height="407" fill="#fff"/>
<path d="M487.5 569.5 L823.5 569.5 M487.5 569.5 L487.5 656.5 M487.5 710.5 L487.5 764.5 M487.5 808.5 L487.5 829.5 M487.5 884.5 L487.5 927.5 M487.5 927.5 L823.5 927.5 M487.5 743.5 L530.5 743.5 M552.5 569.5 L552.5 602.5 M552.5 645.5 L552.5 677.5 M552.5 677.5 L595.5 677.5 M595.5 569.5 L595.5 591.5 M595.5 645.5 L595.5 677.5 M574.5 677.5 L574.5 710.5 M574.5 775.5 L574.5 808.5 M574.5 808.5 L660.5 808.5 M660.5 569.5 L660.5 661.5 M660.5 705.5 L660.5 840.5 M660.5 894.5 L660.5 927.5 M660.5 927.5 L660.5 949.5 M823.5 569.5 L823.5 721.5 M823.5 775.5 L823.5 927.5" stroke="#0000ff" stroke-width="1.25" fill="none" stroke-linecap="square"/>
<rect x="549.0" y="566.0" width="7" height="7" fill="#0000ff"/>
<rect x="592.0" y="566.0" width="7" height="7" fill="#0000ff"/>
<rect x="657.0" y="566.0" width="7" height="7" fill="#0000ff"/>
<rect x="571.0" y="674.0" width="7" height="7" fill="#0000ff"/>
<rect x="484.0" y="740.0" width="7" height="7" fill="#0000ff"/>
<rect x="657.0" y="805.0" width="7" height="7" fill="#0000ff"/>
<rect x="657.0" y="924.0" width="7" height="7" fill="#0000ff"/>
<path d="M487.5 656.5 L487.5 661.5 L476.5 667.5 L498.5 677.5 L476.5 688.5 L498.5 699.5 L487.5 705.5 L487.5 710.5 M487.5 829.5 L487.5 835.5 L498.5 840.5 L476.5 851.5 L498.5 862.5 L476.5 873.5 L487.5 878.5 L487.5 884.5 M487.5 764.5 L487.5 778.5 M476.5 778.5 L498.5 778.5 L487.5 794.5 L476.5 778.5 M476.5 794.5 L498.5 794.5 M487.5 794.5 L487.5 808.5 M552.5 602.5 L552.5 615.5 M541.5 615.5 L563.5 615.5 M552.5 615.5 L563.5 631.5 L541.5 631.5 L552.5 615.5 M552.5 631.5 L552.5 645.5 M530.5 743.5 L538.5 743.5 M538.5 726.5 L542.5 726.5 L542.5 759.5 L538.5 759.5 L538.5 726.5 M574.5 710.5 L542.5 732.5 M542.5 753.5 L574.5 775.5 M574.5 775.5 L555.5 767.5 L560.5 760.5 L574.5 775.5 M660.5 840.5 L660.5 846.5 M654.5 846.5 L669.5 846.5 L669.5 889.5 L654.5 889.5 L654.5 846.5 M660.5 889.5 L660.5 894.5 M648.5 949.5 L673.5 949.5 L661.5 961.5 L648.5 949.5 M823.5 721.5 L823.5 734.5 M801.5 734.5 L846.5 734.5 M812.5 740.5 L835.5 740.5 L835.5 745.5 L812.5 745.5 L812.5 740.5 M801.5 751.5 L846.5 751.5 M812.5 757.5 L835.5 757.5 L835.5 762.5 L812.5 762.5 L812.5 757.5 M823.5 762.5 L823.5 775.5 M810.5 726.5 L815.5 726.5 M812.5 724.5 L812.5 729.5 M660.5 671.5 L660.5 694.5 M657.5 686.5 L664.5 686.5 L660.5 694.5 L657.5 686.5" stroke="#0000a0" stroke-width="1.1" fill="none" stroke-linejoin="miter"/>
<circle cx="660.5" cy="683.5" r="21.7" stroke="#0000a0" stroke-width="1" fill="none"/>
<path d="M595.5 591.2 C610.0 591.2 610.0 608.8 598.5 610.9 C591.5 612.2 588.0 610.9 588.0 609.2 C588.0 606.8 593.5 606.1 599.5 608.8 C610.0 612.9 609.5 626.5 598.5 627.8 C591.5 629.2 588.0 627.8 588.0 626.1 C588.0 623.7 593.5 623.1 599.5 625.8 C610.0 629.2 610.0 645.4 595.5 645.4" stroke="#0000a0" stroke-width="1" fill="none"/>
<g font-weight="bold" font-size="14px" fill="#000">
<text x="527.7" y="605.6">D2</text>
<text x="496.1" y="649.8">1N4148</text>
<text x="609.7" y="611.6">L1</text>
<text x="609.3" y="638.5">1</text>
<text x="454.8" y="676.5">R3</text>
<text x="446.2" y="700.6">2K2</text>
<text x="462.8" y="768.3">D1</text>
<text x="431.2" y="812.5">1N4148</text>
<text x="500.5" y="850.8">R2</text>
<text x="500.5" y="874.2">18</text>
<text x="568.8" y="737.0">Q1</text>
<text x="568.8" y="760.8">BC637</text>
<text x="678.0" y="661.0">I1</text>
<text x="677.3" y="714.5" word-spacing="1.5">PULSE(0 2 0 10)</text>
<text x="839.5" y="725.7">V1</text>
<text x="838.8" y="784.5">24</text>
<text x="671.2" y="860.5">R1</text>
<text x="671.0" y="885.5">0.33</text>
<text x="508.8" y="948.0" word-spacing="0.25">.tran 0 10 0 1m</text>
</g></svg>
<div class="abs" style="left:0;top:973px;width:1278px;height:1px;background:#606060"></div>
<div class="abs" style="left:0;top:975px;width:1280px;height:1px;background:#fff"></div>
<div class="abs" style="left:1229px;top:978px;width:51px;height:16px;border:1px solid;border-color:#808080 #fff #fff #808080"></div>
<div class="abs" style="left:0;top:995px;width:1280px;height:1px;background:#fff"></div>
</body></html>
